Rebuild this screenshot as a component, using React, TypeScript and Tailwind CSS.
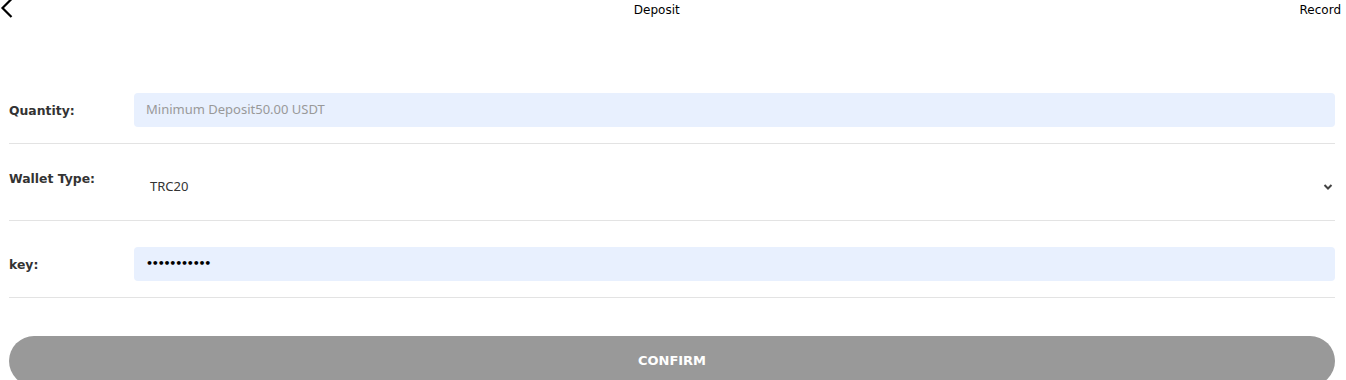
import React from 'react';

const ROW = 'flex items-center border-b border-[#e3e3e3] pt-[26px] pb-[16px]';
const LABEL = 'w-[125px] shrink-0 text-[12.4px] font-bold text-[#333]';

export default function App() {
  return (
    <div className="w-[1346px] h-[380px] overflow-hidden bg-white font-['DejaVu_Sans',sans-serif]">
      {/* header */}
      <div className="flex items-center justify-between h-[19px] pr-[5px]">
        <svg width="14" height="18" viewBox="0 0 14 18" className="-mt-[1px]">
          <polyline points="11.5,-1 2.5,8 11.5,17" fill="none" stroke="#000" strokeWidth="2.2" />
        </svg>
        <div className="text-[12px] text-black">Deposit</div>
        <div className="text-[12px] text-black">Record</div>
      </div>

      <div className="pl-[9px] pr-[11px] mt-[48px]">
        {/* quantity */}
        <div className={ROW}>
          <div className={LABEL + ' pt-[2px]'}>Quantity:</div>
          <div className="flex-1 h-[34px] rounded-[4px] bg-[#e8f0fe] pl-[12px] flex items-center text-[13px] text-[#999] font-['Noto_Sans',sans-serif]">
            Minimum Deposit50.00 USDT
          </div>
        </div>

        {/* wallet type */}
        <div className="flex items-start border-b border-[#e3e3e3] pt-[26px] pb-[16px]">
          <div className={LABEL + ' leading-[18px]'}>Wallet Type:</div>
          <div className="flex-1 h-[34px] pl-[16px] pr-[2px] flex items-center justify-between text-[13px] text-[#333] font-['Noto_Sans',sans-serif]">
            <span>TRC20</span>
            <svg width="10" height="8" viewBox="0 0 10 8">
              <polyline points="1.5,2 5,5.5 8.5,2" fill="none" stroke="#444" strokeWidth="2" />
            </svg>
          </div>
        </div>

        {/* key */}
        <div className={ROW}>
          <div className={LABEL + ' pt-[2px]'}>key:</div>
          <div className="flex-1 h-[34px] rounded-[4px] bg-[#e8f0fe] pl-[12px] flex items-center text-[11px] font-bold text-black tracking-[-1.2px] font-['DejaVu_Sans',sans-serif]">
            •••••••••••
          </div>
        </div>

        {/* confirm */}
        <button className="mt-[38px] w-full h-[50px] rounded-full bg-[#999] text-white text-[13px] font-bold">
          CONFIRM
        </button>
      </div>
    </div>
  );
}
